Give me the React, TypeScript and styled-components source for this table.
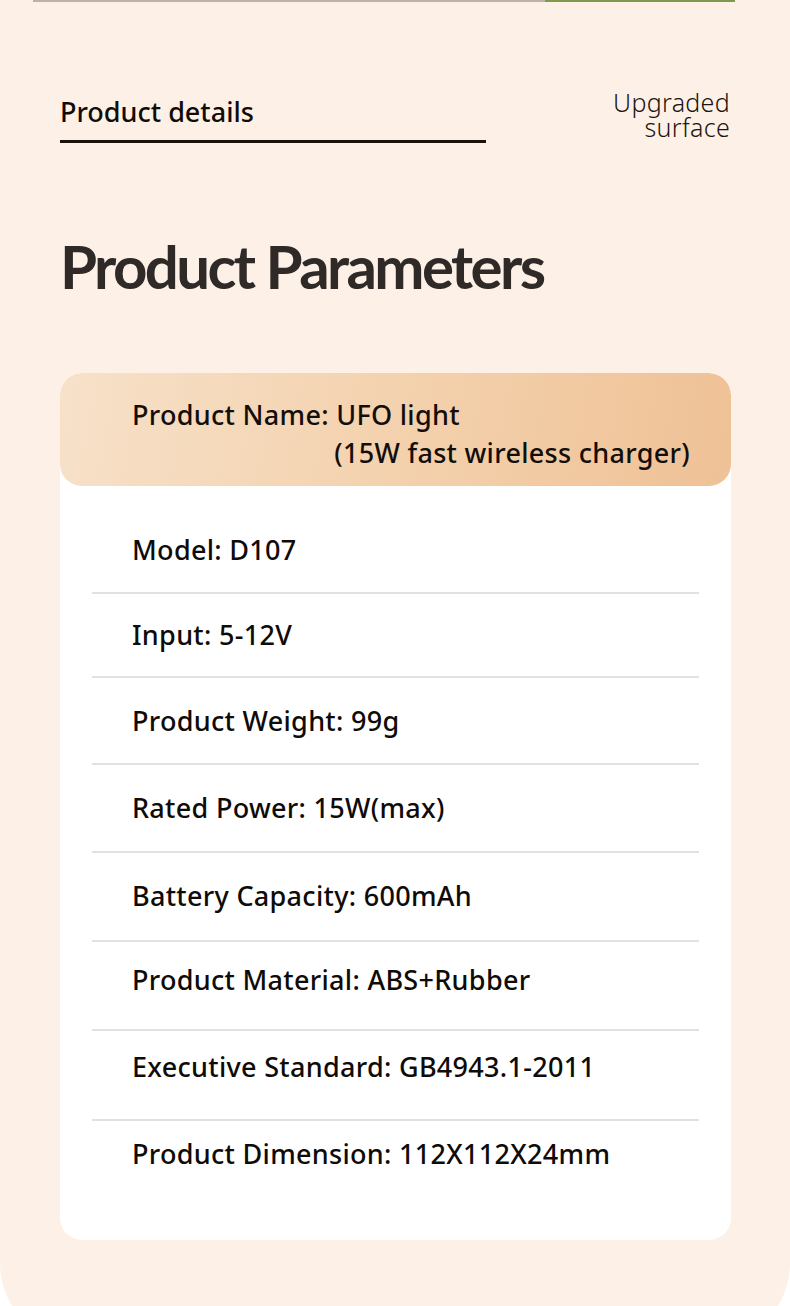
import React from "react";
import styled, { createGlobalStyle } from "styled-components";

const Global = createGlobalStyle`
  html, body { margin: 0; padding: 0; background: #ffffff; overflow: hidden; }
  body { font-family: "Noto Sans", "Liberation Sans", sans-serif; }
`;

const Viewport = styled.div`
  width: 790px;
  height: 1306px;
  overflow: hidden;
`;

const Page = styled.div`
  width: 790px;
  height: 1346px;
  background: #fdf1e7;
  border-bottom-left-radius: 83px;
  border-bottom-right-radius: 83px;
  display: flex;
  flex-direction: column;
`;

const TopStrip = styled.div`
  display: flex;
  height: 2px;
  margin: 0 55px 0 33px;
`;

const StripPart = styled.div<{ $w: number; $c: string }>`
  width: ${(p) => p.$w}px;
  background: ${(p) => p.$c};
`;

const HeaderRow = styled.div`
  display: flex;
  justify-content: space-between;
  align-items: flex-start;
  padding: 89px 60px 0 60px;
`;

const DetailsBlock = styled.div`
  display: flex;
  flex-direction: column;
  width: 426px;
`;

const DetailsTitle = styled.div`
  font-size: 27px;
  font-weight: 500;
  color: #120c08;
  line-height: 36px;
  padding-top: 3px;
  padding-bottom: 10px;
  border-bottom: 3px solid #1b120c;
`;

const Upgraded = styled.div`
  display: flex;
  flex-direction: column;
  align-items: flex-end;
  margin-top: -1px;
`;

const UpgradedLine = styled.div`
  font-size: 25px;
  font-weight: 300;
  color: #1c140f;
  line-height: 25px;
  height: 25px;
  letter-spacing: 0.3px;
`;

const BigTitle = styled.h1`
  margin: 88px 0 0 60px;
  font-family: Lato, "Noto Sans", sans-serif;
  font-size: 60px;
  font-weight: 700;
  letter-spacing: -2.6px;
  color: #2f2a27;
  line-height: 70px;
`;

const Card = styled.div`
  margin: 72px 59px 0 60px;
  height: 867px;
  background: #ffffff;
  border-radius: 22px;
  display: flex;
  flex-direction: column;
  overflow: hidden;
`;

const CardHead = styled.div`
  height: 113px;
  background: linear-gradient(100deg, #f7e1c9 0%, #f3d0ab 55%, #efc196 100%);
  border-radius: 22px;
  display: flex;
  flex-direction: column;
  padding: 23px 41px 0 72px;
  box-sizing: border-box;
`;

const HeadLine = styled.div<{ $right?: boolean }>`
  font-size: 27px;
  font-weight: 500;
  color: #140e0a;
  line-height: 38px;
  letter-spacing: 0.3px;
  text-align: ${(p) => (p.$right ? "right" : "left")};
`;

const Rows = styled.div`
  display: flex;
  flex-direction: column;
  padding: 22px 32px 0 32px;
`;

const Row = styled.div<{ $h: number; $top: number; $last?: boolean }>`
  height: ${(p) => p.$h}px;
  box-sizing: border-box;
  padding: ${(p) => p.$top}px 0 0 40px;
  border-bottom: ${(p) => (p.$last ? "none" : "2px solid #e3e1e0")};
`;

const RowText = styled.div`
  font-size: 27px;
  font-weight: 500;
  color: #0f0b08;
  line-height: 30px;
  letter-spacing: 0.3px;
`;

const rows = [
  { t: "Model: D107", h: 86, top: 27 },
  { t: "Input: 5-12V", h: 84, top: 26 },
  { t: "Product Weight: 99g", h: 87, top: 28 },
  { t: "Rated Power: 15W(max)", h: 88, top: 28 },
  { t: "Battery Capacity: 600mAh", h: 89, top: 28 },
  { t: "Product Material: ABS+Rubber", h: 89, top: 23 },
  { t: "Executive Standard: GB4943.1-2011", h: 90, top: 21 },
  { t: "Product Dimension: 112X112X24mm", h: 90, top: 18, last: true },
];

export default function App() {
  return (
    <>
      <Global />
      <Viewport>
        <Page>
          <TopStrip>
            <StripPart $w={512} $c="#bdb2a8" />
            <StripPart $w={190} $c="#7f9a4c" />
          </TopStrip>
          <HeaderRow>
            <DetailsBlock>
              <DetailsTitle>Product details</DetailsTitle>
            </DetailsBlock>
            <Upgraded>
              <UpgradedLine>Upgraded</UpgradedLine>
              <UpgradedLine>surface</UpgradedLine>
            </Upgraded>
          </HeaderRow>
          <BigTitle>Product Parameters</BigTitle>
          <Card>
            <CardHead>
              <HeadLine>Product Name: UFO light</HeadLine>
              <HeadLine $right>(15W fast wireless charger)</HeadLine>
            </CardHead>
            <Rows>
              {rows.map((r) => (
                <Row key={r.t} $h={r.h} $top={r.top} $last={r.last}>
                  <RowText>{r.t}</RowText>
                </Row>
              ))}
            </Rows>
          </Card>
        </Page>
      </Viewport>
    </>
  );
}
